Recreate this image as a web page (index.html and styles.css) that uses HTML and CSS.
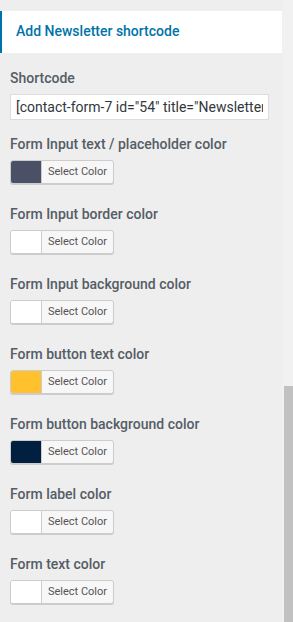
FILE: index.html
```html
<!DOCTYPE html>
<html lang="en">
<head>
    <meta charset="UTF-8">
    <meta name="viewport" content="width=device-width, initial-scale=1.0">
    <title>Newsletter settings</title>
    <link rel="stylesheet" href="styles.css">
</head>
<body>
    <div class="panel">
        <div class="section-title">Add Newsletter shortcode</div>

        <div class="fields">
            <div class="field field-text">
                <label class="field-label">Shortcode</label>
                <input class="shortcode-input" type="text" readonly value='[contact-form-7 id="54" title="Newsletter"]'>
            </div>

            <div class="field">
                <label class="field-label">Form Input text / placeholder color</label>
                <button class="color-result"><span class="swatch swatch-slate"></span><span class="color-text">Select Color</span></button>
            </div>

            <div class="field">
                <label class="field-label">Form Input border color</label>
                <button class="color-result"><span class="swatch"></span><span class="color-text">Select Color</span></button>
            </div>

            <div class="field">
                <label class="field-label">Form Input background color</label>
                <button class="color-result"><span class="swatch"></span><span class="color-text">Select Color</span></button>
            </div>

            <div class="field">
                <label class="field-label">Form button text color</label>
                <button class="color-result"><span class="swatch swatch-yellow"></span><span class="color-text">Select Color</span></button>
            </div>

            <div class="field">
                <label class="field-label">Form button background color</label>
                <button class="color-result"><span class="swatch swatch-navy"></span><span class="color-text">Select Color</span></button>
            </div>

            <div class="field">
                <label class="field-label">Form label color</label>
                <button class="color-result"><span class="swatch"></span><span class="color-text">Select Color</span></button>
            </div>

            <div class="field">
                <label class="field-label">Form text color</label>
                <button class="color-result"><span class="swatch"></span><span class="color-text">Select Color</span></button>
            </div>
        </div>
    </div>

    <div class="scrollbar">
        <div class="scroll-thumb"></div>
    </div>
</body>
</html>
```

FILE: styles.css
```css
body {
    margin: 0;
    height: 622px;
    overflow: hidden;
    display: flex;
    background-color: #eeeeee;
    font-family: Roboto, "Liberation Sans", sans-serif;
    color: #555d66;
}

.panel {
    width: 282px;
    padding-top: 11px;
}

.section-title {
    height: 42px;
    box-sizing: border-box;
    background-color: #ffffff;
    border-left: 2px solid #0073aa;
    padding-left: 14px;
    line-height: 40px;
    font-size: 14px;
    font-weight: 500;
    color: #0073aa;
}

.fields {
    padding: 15px 10px 0 10px;
}

.field {
    margin-bottom: 20px;
}

.field-text {
    margin-bottom: 14px;
}

.field-label {
    display: block;
    font-size: 14px;
    line-height: 20px;
    font-weight: 500;
    margin-bottom: 6px;
}

.shortcode-input {
    display: block;
    width: 259px;
    height: 26px;
    box-sizing: border-box;
    margin: 0;
    padding: 0 5px;
    border: 1px solid #dddddd;
    background-color: #ffffff;
    font-family: Roboto, "Liberation Sans", sans-serif;
    font-size: 14px;
    color: #32373c;
    outline: none;
}

.color-result {
    display: flex;
    align-items: stretch;
    width: 104px;
    height: 24px;
    margin: 0;
    padding: 0;
    box-sizing: border-box;
    border: 1px solid #cccccc;
    border-radius: 3px;
    background-color: #f7f7f7;
    box-shadow: 0 1px 0 #cccccc;
    overflow: hidden;
    cursor: pointer;
}

.swatch {
    width: 30px;
    background-color: #ffffff;
    border-right: 1px solid #cccccc;
}

.swatch-slate { background-color: #4a5066; }
.swatch-yellow { background-color: #ffc12e; }
.swatch-navy { background-color: #01203f; }

.color-text {
    flex: 1;
    font-family: Roboto, "Liberation Sans", sans-serif;
    font-size: 11px;
    line-height: 22px;
    color: #555555;
    text-align: center;
}

.scrollbar {
    width: 11px;
    background-color: #f1f1f1;
    padding-left: 2px;
    box-sizing: border-box;
}

.scroll-thumb {
    margin-top: 386px;
    height: 236px;
    background-color: #c1c1c1;
}
```
